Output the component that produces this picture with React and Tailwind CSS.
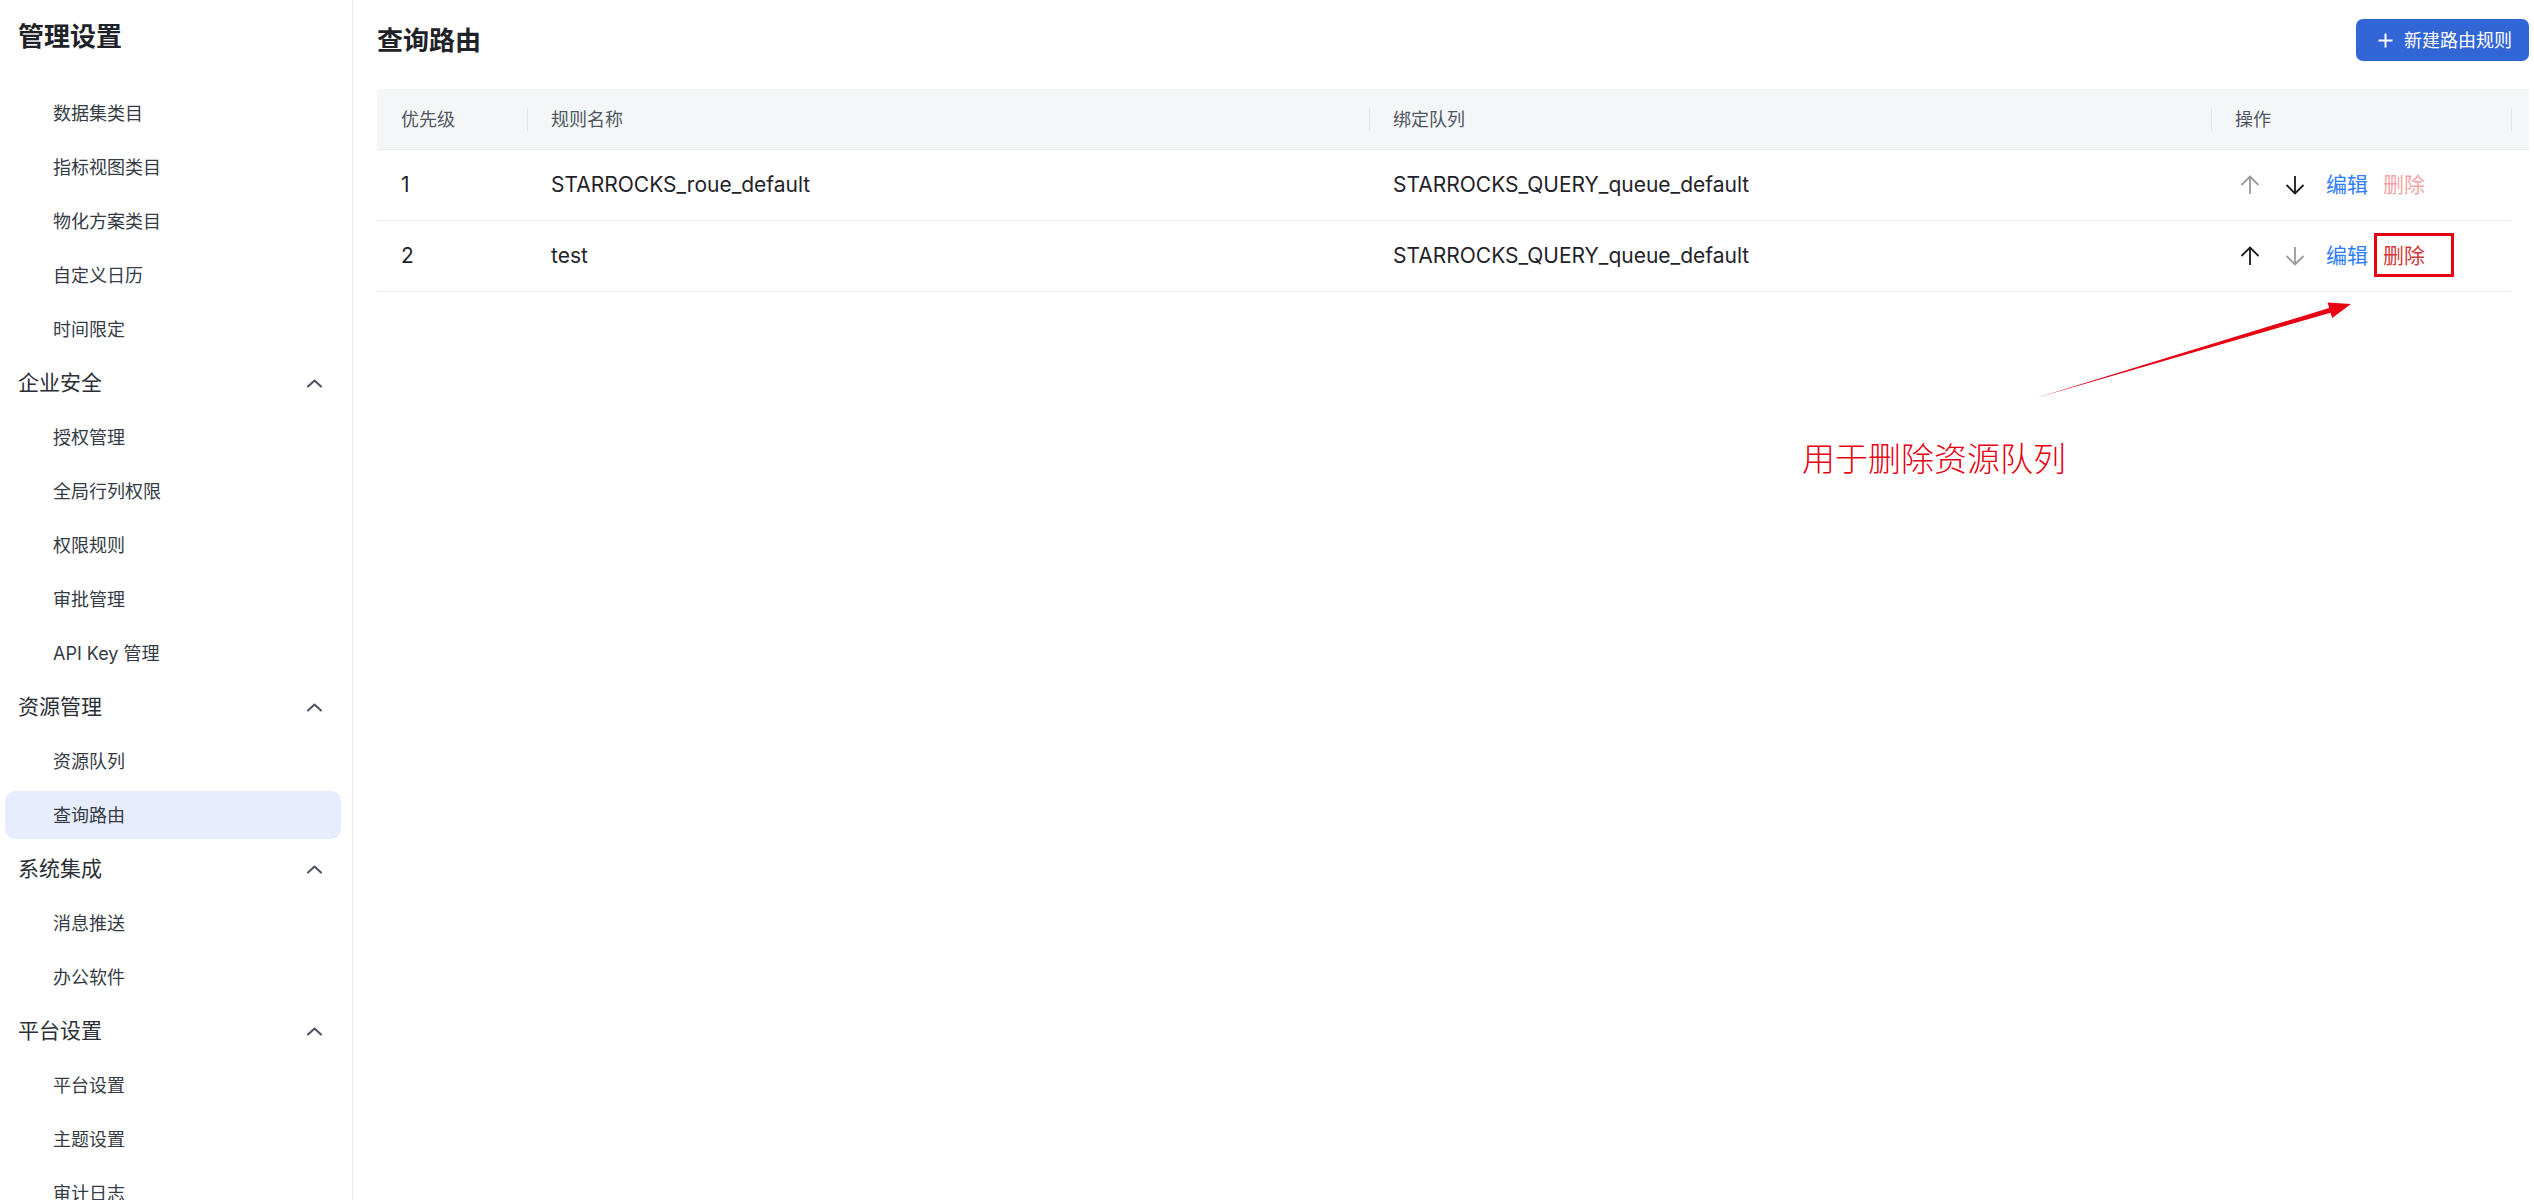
const font = { fontFamily: 'Inter, "Noto Sans CJK SC", sans-serif' }

const groups = [
  { items: ['数据集类目', '指标视图类目', '物化方案类目', '自定义日历', '时间限定'] },
  { title: '企业安全', items: ['授权管理', '全局行列权限', '权限规则', '审批管理', 'API Key 管理'] },
  { title: '资源管理', items: ['资源队列', '查询路由'] },
  { title: '系统集成', items: ['消息推送', '办公软件'] },
  { title: '平台设置', items: ['平台设置', '主题设置', '审计日志'] },
]

const rows = [
  { priority: '1', name: 'STARROCKS_roue_default', queue: 'STARROCKS_QUERY_queue_default', canUp: false, canDown: true, canDelete: false },
  { priority: '2', name: 'test', queue: 'STARROCKS_QUERY_queue_default', canUp: true, canDown: false, canDelete: true },
]

function ChevronUp() {
  return (
    <svg width="15" height="9" viewBox="0 0 15 9" fill="none">
      <path d="M1 7.5 L7.5 1.5 L14 7.5" stroke="#4b5263" strokeWidth="2" strokeLinecap="round" strokeLinejoin="round" />
    </svg>
  )
}

function Arrow({ dir, active }) {
  return (
    <svg width="20" height="20" viewBox="0 0 20 20" fill="none" className={dir === 'down' ? 'rotate-180' : ''}>
      <path d="M10 1.5 V19 M1.5 10 L10 1.5 L18.5 10" stroke={active ? '#1a1a1a' : '#9a9a9a'} strokeWidth="1.8" />
    </svg>
  )
}

function NavRow({ label, group, active }) {
  return (
    <div className="h-[54px] py-[3px] pl-[5px] pr-[11px]">
      <div
        className={`h-[48px] rounded-[10px] flex items-center justify-between ${
          group ? 'pl-[13px] pr-[19px] text-[21px] text-[#2b2f36]' : 'pl-[48px] text-[18px] text-[#353b45]'
        } ${active ? 'bg-[#e7edfd]' : ''}`}
      >
        <span>{label}</span>
        {group && <ChevronUp />}
      </div>
    </div>
  )
}

function Sidebar() {
  return (
    <aside className="w-[353px] shrink-0 border-r border-[#e8e9ec] h-full overflow-hidden">
      <div className="h-[72px] flex items-center pl-[18px] text-[26px] font-bold text-[#1f2329]">管理设置</div>
      <nav className="mt-[14px]">
        {groups.map((g, i) => (
          <div key={i}>
            {g.title && <NavRow label={g.title} group />}
            {g.items.map((it) => (
              <NavRow key={it} label={it} active={it === '查询路由'} />
            ))}
          </div>
        ))}
      </nav>
    </aside>
  )
}

function HeadCell({ label, sep }) {
  return (
    <div className="flex items-center">
      {sep && <div className="w-px h-[23px] bg-[#e3e5e8]" />}
      <span className={sep ? 'ml-[23px]' : 'ml-[24px]'}>{label}</span>
    </div>
  )
}

function RouteTable() {
  return (
    <div className="mt-[28px]">
      <div className="grid grid-cols-[150px_842px_842px_300px_18px] h-[61px] bg-[#f5f6f8] border-b border-[#e8e9ec] text-[18px] text-[#4e5661]">
        <HeadCell label="优先级" />
        <HeadCell label="规则名称" sep />
        <HeadCell label="绑定队列" sep />
        <HeadCell label="操作" sep />
        <div className="flex items-center">
          <div className="w-px h-[23px] bg-[#e3e5e8]" />
        </div>
      </div>
      {rows.map((r) => (
        <div
          key={r.priority}
          className="grid grid-cols-[150px_842px_842px_300px] w-[2134px] h-[71px] border-b border-[#e8e9ec] text-[21px] text-[#1f2329]"
        >
          <div className="flex items-center pl-[24px]">{r.priority}</div>
          <div className="flex items-center pl-[24px]">{r.name}</div>
          <div className="flex items-center pl-[24px]">{r.queue}</div>
          <div className="flex items-center pl-[24px]">
            <button className="w-[30px] flex justify-center">
              <Arrow dir="up" active={r.canUp} />
            </button>
            <button className="w-[30px] ml-[15px] flex justify-center">
              <Arrow dir="down" active={r.canDown} />
            </button>
            <span className="ml-[16px] text-[21px] text-[#2f7df6]">编辑</span>
            <span className={`ml-[15px] text-[21px] ${r.canDelete ? 'text-[#d03a3a]' : 'text-[#f0a5a5]'}`}>删除</span>
          </div>
        </div>
      ))}
    </div>
  )
}

export default function App() {
  return (
    <div className="relative w-[2534px] h-[1200px] overflow-hidden bg-white flex" style={font}>
      <Sidebar />
      <main className="flex-1 pl-[24px] pr-[5px]">
        <div className="mt-[19px] h-[42px] flex items-center justify-between">
          <h1 className="text-[26px] font-bold text-[#1f2329]">查询路由</h1>
          <button className="h-[42px] w-[173px] rounded-[7px] bg-[#3265d5] text-white text-[18px] flex items-center pl-[22px]">
            <svg width="15" height="15" viewBox="0 0 15 15" fill="none">
              <path d="M7.5 0.5 V14.5 M0.5 7.5 H14.5" stroke="white" strokeWidth="2" />
            </svg>
            <span className="ml-[11px]">新建路由规则</span>
          </button>
        </div>
        <RouteTable />
      </main>

      {/* annotation overlay */}
      <div className="absolute left-[2374px] top-[233px] w-[80px] h-[44px] border-[3px] border-[#e60012]" />
      <svg className="absolute inset-0 pointer-events-none" width="2534" height="1200" viewBox="0 0 2534 1200">
        <polygon
          points="2036,398 2329.2,307.9 2327.6,302.6 2351,304 2332.2,318 2330.6,312.7"
          fill="#e60012"
        />
      </svg>
      <div className="absolute left-[1802px] top-[441px] text-[33px] leading-[36px] text-[#e60012] font-light">
        用于删除资源队列
      </div>
    </div>
  )
}
